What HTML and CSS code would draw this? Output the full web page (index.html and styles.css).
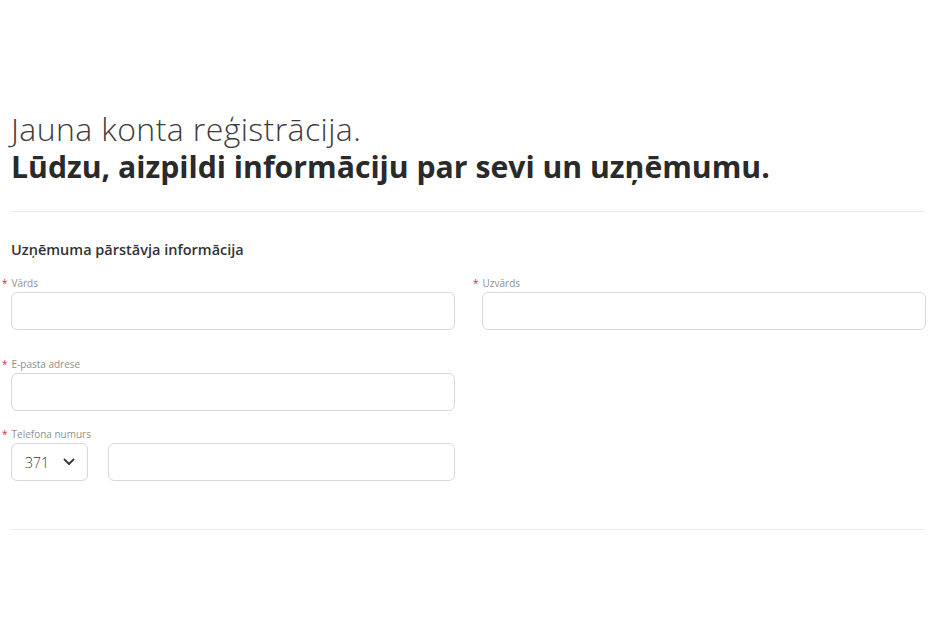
FILE: index.html
```html
<!DOCTYPE html>
<html lang="lv">
<head>
<meta charset="utf-8">
<link rel="stylesheet" href="styles.css">
</head>
<body>
<main class="page">
  <h1 class="title">
    <span class="title-light">Jauna konta reģistrācija.</span>
    <span class="title-bold">Lūdzu, aizpildi informāciju par sevi un uzņēmumu.</span>
  </h1>
  <hr class="divider">
  <section class="section">
    <h2 class="section-title">Uzņēmuma pārstāvja informācija</h2>
    <div class="grid">
      <div class="field">
        <label class="label"><span class="req">*</span>Vārds</label>
        <div class="input"></div>
      </div>
      <div class="field">
        <label class="label"><span class="req">*</span>Uzvārds</label>
        <div class="input"></div>
      </div>
      <div class="field">
        <label class="label"><span class="req">*</span>E-pasta adrese</label>
        <div class="input"></div>
      </div>
      <div class="field phone-field">
        <label class="label"><span class="req">*</span>Telefona numurs</label>
        <div class="phone">
          <div class="input select">
            <span class="code">371</span>
            <svg class="chev" width="12" height="8" viewBox="0 0 12 8"><path d="M1.5 1.5 L6 6 L10.5 1.5" fill="none" stroke="#3a3a3a" stroke-width="1.8" stroke-linecap="round" stroke-linejoin="round"/></svg>
          </div>
          <div class="input grow"></div>
        </div>
      </div>
    </div>
  </section>
  <hr class="divider bottom">
</main>
</body>
</html>
```
FILE: styles.css
```css
* { box-sizing: border-box; }
html, body { margin: 0; background: #fff; }
body { font-family: "Open Sans", "Noto Sans", sans-serif; color: #2b2b2b; }
.page { padding: 110px 2px 0 11px; }
.title { margin: 0; line-height: 38px; font-weight: normal; }
.title-light { display: block; font-size: 32px; font-weight: 300; color: #3c3c3c; letter-spacing: 0.4px; }
.title-bold { display: block; font-size: 30.2px; font-weight: 700; color: #2a2a2a; letter-spacing: 0; }
.divider { border: 0; border-top: 1px solid #ececec; margin: 25px 1px 0 -1px; }
.section { padding-top: 29px; }
.section-title { margin: 0 0 17px 0; font-size: 14.5px; font-weight: 600; color: #333; line-height: 18px; }
.grid { display: grid; grid-template-columns: 444px 444px; column-gap: 27px; row-gap: 27px; }
.label { display: block; font-size: 10px; line-height: 14px; color: #8f8f8f; margin: 0 0 2px -9px; }
.req { color: #c8323c; margin-right: 4px; }
.input { height: 38px; border: 1.5px solid #d8d8d8; border-radius: 6px; background: #fff; }
.phone-field { grid-column: 1; margin-top: -11px; }
.phone { display: flex; gap: 20px; }
.select { width: 77px; flex: none; display: flex; align-items: center; padding-left: 13px; gap: 14px; }
.code { font-size: 14px; font-weight: 300; color: #3a3a3a; }
.grow { flex: 1; }
.bottom { margin-top: 48px; }
```
